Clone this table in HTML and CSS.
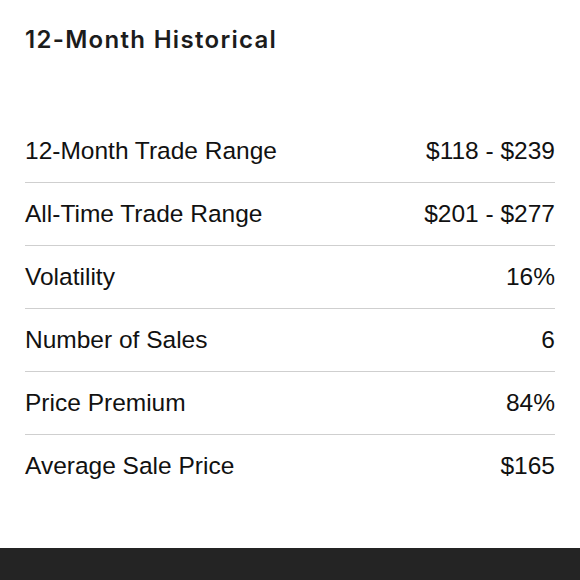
FILE: index.html
```html
<!DOCTYPE html>
<html>
<head>
<meta charset="utf-8">
<link rel="stylesheet" href="styles.css">
</head>
<body>
<div class="page">
  <section class="panel">
    <h2 class="title">12-Month Historical</h2>
    <ul class="stats">
      <li class="row"><span>12-Month Trade Range</span><span>$118 - $239</span></li>
      <li class="row"><span>All-Time Trade Range</span><span>$201 - $277</span></li>
      <li class="row"><span>Volatility</span><span>16%</span></li>
      <li class="row"><span>Number of Sales</span><span>6</span></li>
      <li class="row"><span>Price Premium</span><span>84%</span></li>
      <li class="row"><span>Average Sale Price</span><span>$165</span></li>
    </ul>
  </section>
  <footer class="footer"></footer>
</div>
</body>
</html>
```
FILE: styles.css
```css
html, body {
  margin: 0;
  padding: 0;
  background: #ffffff;
}
.page {
  width: 580px;
  height: 580px;
  display: flex;
  flex-direction: column;
  overflow: hidden;
}
.panel {
  flex: 1;
  padding: 0 25px;
}
.title {
  margin: 0;
  padding-top: 25px;
  height: 30px;
  line-height: 30px;
  font-family: Inter, "Liberation Sans", sans-serif;
  font-size: 24px;
  font-weight: 600;
  letter-spacing: 1.3px;
  color: #1c1c1c;
}
.stats {
  list-style: none;
  margin: 65px 0 0 0;
  padding: 0;
}
.row {
  display: flex;
  justify-content: space-between;
  align-items: center;
  height: 62px;
  border-bottom: 1px solid #cfcfcf;
  font-family: "Liberation Sans", Arial, sans-serif;
  font-size: 24.5px;
  color: #111111;
}
.row:last-child {
  border-bottom: none;
}
.footer {
  height: 32px;
  background: #242424;
}
```
